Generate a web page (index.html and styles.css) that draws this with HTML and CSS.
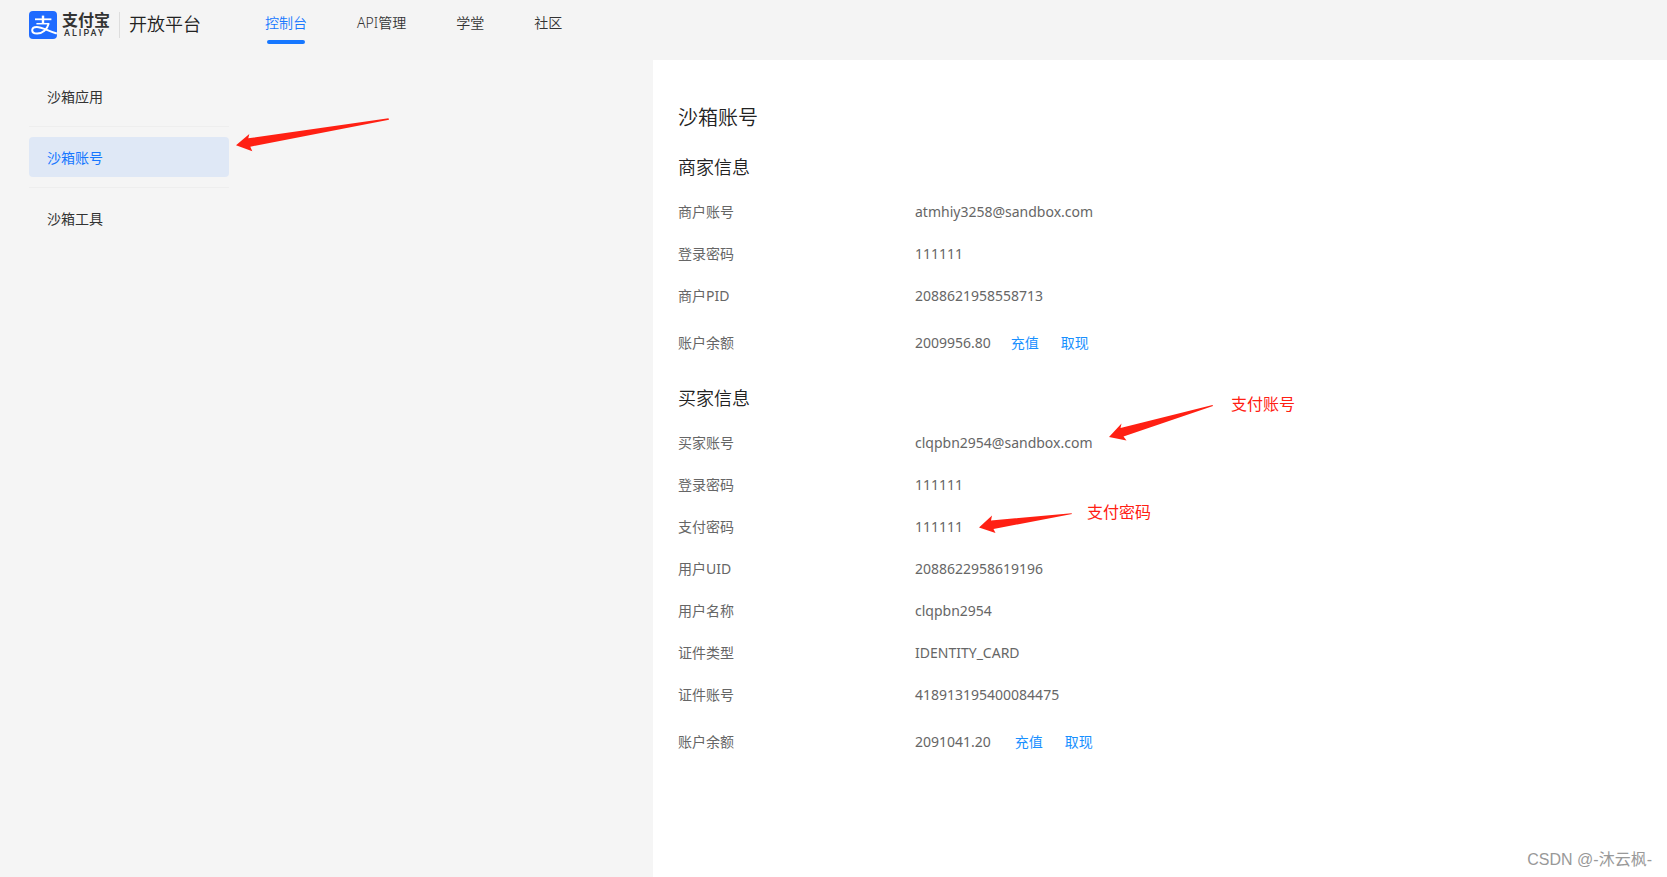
FILE: index.html
```html
<!DOCTYPE html>
<html lang="zh-CN">
<head>
<meta charset="utf-8">
<title>沙箱账号 - 支付宝开放平台</title>
<link rel="stylesheet" href="styles.css">
</head>
<body>
<header class="header">
  <a class="brand" href="#">
    <svg class="brand-mark" viewBox="0 0 28 28" aria-hidden="true">
      <rect width="28" height="28" rx="4" fill="#1f6bff"/>
      <g fill="none" stroke="#fff" stroke-linecap="butt">
        <path d="M6 8.3H22.4" stroke-width="1.8"/>
        <path d="M14 4.6V12.6" stroke-width="2.4"/>
        <path d="M7.4 12.7H20" stroke-width="1.5"/>
        <path d="M19.8 12.2C18.2 18.6 13.4 22.6 8.2 22.6C4.8 22.6 3.2 21 3.2 19.2C3.2 17.2 5 15.9 7.800 15.9C12.8 15.9 18.2 19.6 27.8 22.6" stroke-width="2"/>
      </g>
    </svg>
    <span class="brand-text">
      <span class="brand-cn">支付宝</span>
      <span class="brand-en">ALIPAY</span>
    </span>
    <span class="brand-product">开放平台</span>
  </a>
  <nav class="nav" aria-label="主导航">
    <a class="nav-link nav-link-active" href="#" aria-current="page">控制台</a>
    <a class="nav-link" href="#">API管理</a>
    <a class="nav-link" href="#">学堂</a>
    <a class="nav-link" href="#">社区</a>
  </nav>
</header>
<div class="layout">
  <aside class="sidebar">
    <ul class="menu">
      <li class="menu-item"><a class="menu-link" href="#">沙箱应用</a></li>
      <li class="menu-item">
        <a class="menu-link menu-link-active" href="#" aria-current="page">沙箱账号</a>
        <svg class="arrow arrow-menu" width="154" height="34" viewBox="0 0 154 34" aria-hidden="true">
          <path d="M0 27.300L13.300 16L12.300 20.300L152.500 .3L153 1.800L14.300 28.700L16.300 33.300Z"/>
        </svg>
      </li>
      <li class="menu-item"><a class="menu-link" href="#">沙箱工具</a></li>
    </ul>
  </aside>
  <main class="content">
    <h1 class="page-title">沙箱账号</h1>
    <section class="section">
      <h2 class="section-title">商家信息</h2>
      <dl class="info">
        <div class="row"><dt>商户账号</dt><dd>atmhiy3258@sandbox.com</dd></div>
        <div class="row"><dt>登录密码</dt><dd>111111</dd></div>
        <div class="row"><dt>商户PID</dt><dd>2088621958558713</dd></div>
        <div class="row row-balance"><dt>账户余额</dt><dd>2009956.80<span class="actions"><a href="#">充值</a><a href="#">取现</a></span></dd></div>
      </dl>
    </section>
    <section class="section">
      <h2 class="section-title">买家信息</h2>
      <dl class="info">
        <div class="row">
          <dt>买家账号</dt>
          <dd>clqpbn2954@sandbox.com
            <span class="note note-account">
              <svg class="arrow" width="104" height="36" viewBox="0 0 104 36" aria-hidden="true">
                <path d="M0 32L12.500 18.500L11.500 23L103.500 0L104 1L14.500 31.500L17.500 35.500Z"/>
              </svg>
              <span class="note-text">支付账号</span>
            </span>
          </dd>
        </div>
        <div class="row"><dt>登录密码</dt><dd>111111</dd></div>
        <div class="row">
          <dt>支付密码</dt>
          <dd>111111
            <span class="note note-password">
              <svg class="arrow" width="93" height="20" viewBox="0 0 93 20" aria-hidden="true">
                <path d="M0 14.500L13 2.500L12 7.500L92.500 .2L93 1L14.500 16L16.500 20Z"/>
              </svg>
              <span class="note-text">支付密码</span>
            </span>
          </dd>
        </div>
        <div class="row"><dt>用户UID</dt><dd>2088622958619196</dd></div>
        <div class="row"><dt>用户名称</dt><dd>clqpbn2954</dd></div>
        <div class="row"><dt>证件类型</dt><dd>IDENTITY_CARD</dd></div>
        <div class="row"><dt>证件账号</dt><dd>418913195400084475</dd></div>
        <div class="row row-balance"><dt>账户余额</dt><dd>2091041.20<span class="actions actions-wide"><a href="#">充值</a><a href="#">取现</a></span></dd></div>
      </dl>
    </section>
  </main>
</div>
<p class="watermark">CSDN @-沐云枫-</p>
</body>
</html>
```

FILE: styles.css
```css
* {
  box-sizing: border-box;
}

body {
  margin: 0;
  min-height: 100vh;
  display: flex;
  flex-direction: column;
  position: relative;
  background: #f5f5f5;
  color: #333;
  font: 14px/22px "Noto Sans", "Noto Sans CJK SC", sans-serif;
}

a {
  color: inherit;
  text-decoration: none;
}

.header {
  display: flex;
  align-items: flex-start;
  gap: 64px;
  height: 60px;
  padding: 0 29px;
  background: #f4f4f4;
}

.brand {
  display: flex;
  align-items: center;
  height: 50px;
}

.brand-mark {
  width: 28px;
  height: 28px;
}

.brand-text {
  display: flex;
  flex-direction: column;
  margin-left: 5px;
  padding-right: 9px;
  border-right: 1px solid #ddd;
}

.brand-cn {
  font-size: 16px;
  line-height: 16px;
  font-weight: 700;
}

.brand-en {
  padding-left: 2px;
  font: 500 9px/10px Roboto, sans-serif;
  letter-spacing: 2px;
}

.brand-product {
  margin-left: 9px;
  padding-bottom: 2px;
  font-size: 18px;
  line-height: 24px;
  color: #222;
  font-weight: 350;
}

.nav {
  display: flex;
  gap: 50px;
}

.nav-link {
  display: flex;
  flex-direction: column;
  align-items: center;
  gap: 6px;
  padding-top: 12px;
  font-weight: 350;
}

.nav-link-active {
  color: #1677ff;
}

.nav-link-active::after {
  content: "";
  width: 38px;
  height: 4px;
  border-radius: 2px;
  background: #1677ff;
}

.layout {
  flex: 1;
  display: grid;
  grid-template-columns: 653fr 1014fr;
}

.sidebar {
  padding: 6px 29px;
}

.menu {
  width: 200px;
  margin: 0;
  padding: 0;
  list-style: none;
}

.menu-item {
  position: relative;
  padding: 10px 0;
}

.menu-item + .menu-item {
  border-top: 1px solid #eee;
}

.menu-link {
  display: block;
  padding: 10px 18px 8px;
  border-radius: 4px;
}

.menu-link-active {
  background: #dfe8f6;
  color: #1677ff;
}

.arrow {
  display: block;
  flex: none;
  fill: #ff2013;
}

.arrow-menu {
  position: absolute;
  left: 207px;
  top: -9px;
}

.content {
  padding: 44px 25px;
  background: #fff;
}

.page-title {
  margin: 0 0 21px;
  color: #222;
  font-size: 20px;
  line-height: 28px;
  font-weight: 350;
}

.section-title {
  margin: 0 0 20px;
  color: #222;
  font-size: 18px;
  line-height: 28px;
  font-weight: 350;
}

.info {
  margin: 0;
  color: #666;
}

.row {
  display: grid;
  grid-template-columns: 237px 1fr;
  padding-bottom: 20px;
}

.row-balance {
  padding: 5px 0 30px;
}

.row dd {
  position: relative;
  margin: 0;
}

.actions {
  display: inline-flex;
  gap: 22px;
  margin-left: 20px;
  color: #1890ff;
}

.actions-wide {
  margin-left: 24px;
}

.note {
  position: absolute;
  display: flex;
  color: #ff2013;
  font-size: 16px;
}

.note-account {
  left: 194px;
  top: -27px;
  gap: 18px;
}

.note-password {
  left: 64px;
  top: -3px;
  gap: 15px;
}

.note-text {
  margin-top: -12px;
}

.watermark {
  position: absolute;
  right: 15px;
  bottom: 5px;
  margin: 0;
  color: #999;
  font-family: "Liberation Sans", "Noto Sans CJK SC", sans-serif;
  font-size: 16px;
  line-height: 24px;
}
```
